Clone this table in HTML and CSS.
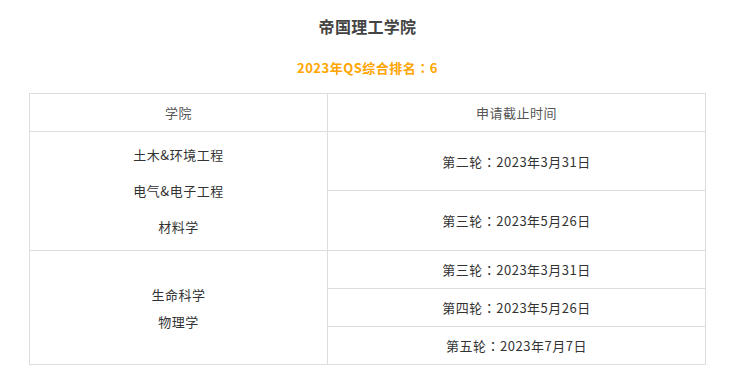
FILE: index.html
```html
<!DOCTYPE html>
<html lang="zh-CN">
<head>
<meta charset="utf-8">
<title>帝国理工学院</title>
<link rel="stylesheet" href="styles.css">
</head>
<body>
<div class="page">
  <h1 class="title">帝国理工学院</h1>
  <p class="rank">2023年QS综合排名<span class="colon" lang="zh-TW">：</span>6</p>
  <table class="deadlines">
    <thead>
      <tr class="head-row">
        <th class="col-school">学院</th>
        <th class="col-date">申请截止时间</th>
      </tr>
    </thead>
    <tbody>
      <tr class="row-tall">
        <td rowspan="2" class="schools schools-a">
          <div>土木&amp;环境工程</div>
          <div>电气&amp;电子工程</div>
          <div>材料学</div>
        </td>
        <td>第二轮<span class="colon" lang="zh-TW">：</span>2023年3月31日</td>
      </tr>
      <tr class="row-tall2">
        <td>第三轮<span class="colon" lang="zh-TW">：</span>2023年5月26日</td>
      </tr>
      <tr class="row-short">
        <td rowspan="3" class="schools schools-b">
          <div>生命科学</div>
          <div>物理学</div>
        </td>
        <td>第三轮<span class="colon" lang="zh-TW">：</span>2023年3月31日</td>
      </tr>
      <tr class="row-short2">
        <td>第四轮<span class="colon" lang="zh-TW">：</span>2023年5月26日</td>
      </tr>
      <tr class="row-short">
        <td>第五轮<span class="colon" lang="zh-TW">：</span>2023年7月7日</td>
      </tr>
    </tbody>
  </table>
</div>
</body>
</html>
```
FILE: styles.css
```css
html, body {
  margin: 0;
  padding: 0;
  background: #fff;
}
body {
  font-family: "Noto Sans CJK SC", "Noto Sans", sans-serif;
  font-size: 13px;
  color: #333;
}
.page {
  padding: 13px 0 0 29px;
  width: 677px;
}
.title {
  margin: 0;
  text-align: center;
  font-size: 16px;
  font-weight: bold;
  color: #444;
  line-height: 26px;
  letter-spacing: 0.3px;
}
.rank {
  margin: 19px 0 0;
  text-align: center;
  font-size: 13px;
  font-weight: bold;
  color: #ffa500;
  line-height: 20px;
  letter-spacing: 0.5px;
}
.colon {
  font-family: "Noto Sans CJK TC", "Noto Sans CJK SC", sans-serif;
}
.deadlines {
  margin-top: 15px;
  width: 677px;
  border-collapse: collapse;
  table-layout: fixed;
}
.deadlines th,
.deadlines td {
  border: 1px solid #ddd;
  text-align: center;
  vertical-align: middle;
  padding: 0;
  letter-spacing: 0.5px;
}
.deadlines th {
  font-weight: normal;
  color: #555;
}
.col-school { width: 297px; }
.head-row { height: 38px; }
.row-tall { height: 59px; }
.row-tall2 { height: 60px; }
.row-short { height: 38px; }
.row-short2 { height: 38px; }
.schools-a div {
  line-height: 36px;
}
.schools-a { padding-top: 4px; }
.schools-b div {
  line-height: 27px;
}
.schools-b { padding-top: 4px; }
```
